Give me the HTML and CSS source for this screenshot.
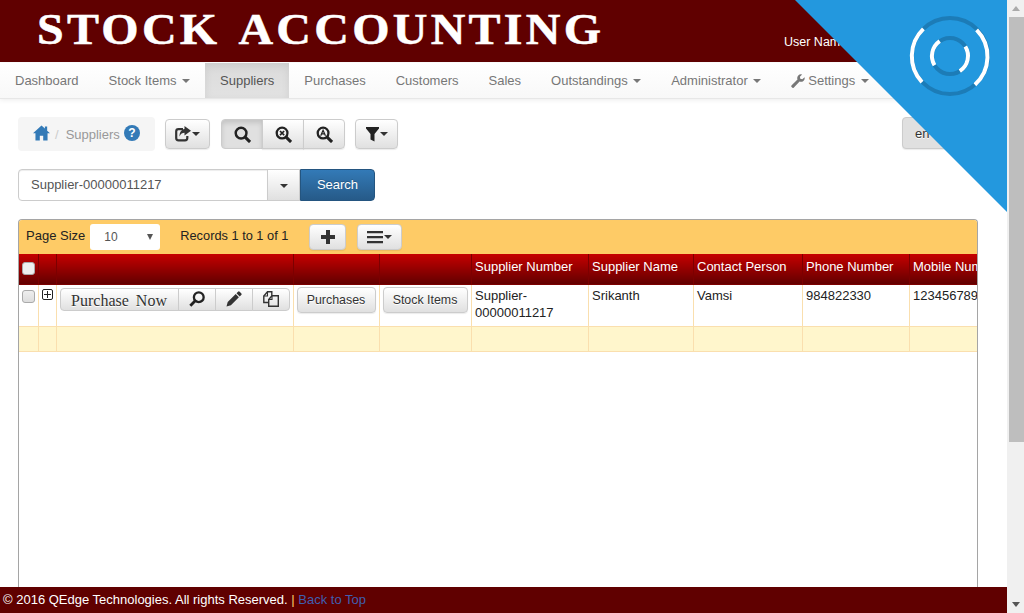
FILE: index.html
```html
<!DOCTYPE html>
<html lang="en">
<head>
<meta charset="utf-8">
<title>Stock Accounting</title>
<link rel="stylesheet" href="styles.css">
</head>
<body>
<div class="shell">
  <div class="page">
    <header class="masthead">
      <div class="brand">STOCK ACCOUNTING</div>
      <div class="user">User Name : admin</div>
    </header>
    <nav class="navbar">
      <a class="nav-item">Dashboard</a>
      <a class="nav-item">Stock Items <i class="caret"></i></a>
      <a class="nav-item active">Suppliers</a>
      <a class="nav-item">Purchases</a>
      <a class="nav-item">Customers</a>
      <a class="nav-item">Sales</a>
      <a class="nav-item">Outstandings <i class="caret"></i></a>
      <a class="nav-item">Administrator <i class="caret"></i></a>
      <a class="nav-item"><svg class="wrench" viewBox="0 0 14 14"><path d="M13.6 3.2a3.8 3.8 0 0 1-5 4.400L2.900 13.400a1.300 1.300 0 0 1-2-.1 1.300 1.300 0 0 1-.2-2L6.500 5.500a3.800 3.800 0 0 1 4.600-5L8.900 2.800l.4 2 2 .4z"/></svg>Settings <i class="caret"></i></a>
    </nav>
    <main class="content">
      <div class="toolbar">
        <div class="crumbs">
          <svg class="home" viewBox="0 0 18 16"><path d="M9 0 0 8.200h2.600V16h4.600v-5h3.600v5h4.600V8.200H18l-3-2.700V1h-2.400v2.300z"/></svg>
          <span class="sep">/</span>
          <span class="crumb">Suppliers</span>
          <span class="help">?</span>
        </div>
        <button class="btn btn-share"><svg class="ico" viewBox="0 0 16 16"><path d="M8 3.200H3.500A2.300 2.300 0 0 0 1.200 5.500v6.500a2.300 2.300 0 0 0 2.300 2.300h6.500a2.300 2.300 0 0 0 2.300-2.300V10" fill="none" stroke="#333" stroke-width="2.200"/><path d="M9.500 0 16 4.800 9.500 9.500V6.800C7.500 6.800 5.500 7.800 4.500 10.500 4.500 6 6.500 3.500 9.500 3z" fill="#333"/></svg><i class="caret dark"></i></button>
        <div class="btn-group">
          <button class="btn pressed"><svg class="ico big" viewBox="0 0 18 18"><circle cx="7.500" cy="7.500" r="5.700" fill="none" stroke="#222" stroke-width="2.600"/><path d="M11.500 11.500 17 17" stroke="#222" stroke-width="3.200"/></svg></button>
          <button class="btn"><svg class="ico big" viewBox="0 0 18 18"><circle cx="7.500" cy="7.500" r="5.700" fill="none" stroke="#222" stroke-width="2.400"/><path d="M11.500 11.500 17 17" stroke="#222" stroke-width="3.200"/><path d="M5.300 5.300l4.400 4.400M9.700 5.300l-4.400 4.400" stroke="#222" stroke-width="1.700"/></svg></button>
          <button class="btn"><svg class="ico big" viewBox="0 0 18 18"><circle cx="7.500" cy="7.500" r="5.700" fill="none" stroke="#222" stroke-width="2.400"/><path d="M11.500 11.500 17 17" stroke="#222" stroke-width="3.200"/><path d="M5 10.200 7.500 4.500 10 10.200M5.900 8.400h3.200" fill="none" stroke="#222" stroke-width="1.300"/></svg></button>
        </div>
        <button class="btn btn-filter"><svg class="ico funnel" viewBox="0 0 13 16"><path d="M0 1h13v1.500L8.500 8v7.500l-4-2V8L0 2.500z" fill="#222"/></svg><i class="caret dark"></i></button>
        <button class="btn lang">en-US</button>
      </div>
      <form class="search">
        <div class="search-box">Supplier-00000011217</div>
        <button type="button" class="btn-drop"><i class="caret dark"></i></button>
        <button type="button" class="btn-search">Search</button>
      </form>
      <section class="grid">
        <div class="grid-bar">
          <span class="bar-text">Page Size</span>
          <div class="pager">10<i class="pager-arrow"></i></div>
          <span class="bar-text records">Records 1 to 1 of 1</span>
          <button class="btn btn-add"><svg class="ico" viewBox="0 0 16 16"><path d="M6 1h4v5h5v4h-5v5H6v-5H1V6h5z" fill="#333"/></svg></button>
          <button class="btn btn-menu"><svg class="ico" viewBox="0 0 16 14"><path d="M0 1h16v2.200H0zM0 6h16v2.200H0zM0 11h16v2.200H0z" fill="#333"/></svg><i class="caret dark"></i></button>
        </div>
        <table class="data">
          <colgroup>
            <col class="c1"><col class="c2"><col class="c3"><col class="c4"><col class="c5"><col class="c6"><col class="c7"><col class="c8"><col class="c9"><col class="c10">
          </colgroup>
          <thead>
            <tr>
              <th class="chk"><span class="check head"></span></th><th></th><th></th><th></th><th></th>
              <th>Supplier Number</th><th>Supplier Name</th><th>Contact Person</th><th>Phone Number</th><th>Mobile Number</th>
            </tr>
          </thead>
          <tbody>
            <tr class="row">
              <td class="chk"><span class="check"></span></td>
              <td class="exp"><span class="expand"></span></td>
              <td class="act">
                <div class="btn-group small">
                  <button class="btn purchase">Purchase Now</button>
                  <button class="btn sq"><svg class="ico" viewBox="0 0 18 18"><circle cx="11" cy="7" r="5.500" fill="none" stroke="#222" stroke-width="2.600"/><path d="M7 11 1.500 16.500" stroke="#222" stroke-width="3.200"/></svg></button>
                  <button class="btn sq"><svg class="ico" viewBox="0 0 16 16"><path d="M12 .8a1.200 1.200 0 0 1 1.700 0l1.500 1.500a1.200 1.200 0 0 1 0 1.700l-1.500 1.500-3.200-3.200zM9.700 3.100l3.200 3.200-8 8L.5 15.500l1.200-4.400z" fill="#333"/></svg></button>
                  <button class="btn sq"><svg class="ico" viewBox="0 0 16 16"><path d="M5.500 11.500H.8V5L4.500.8h4.300v4" fill="none" stroke="#333" stroke-width="1.400"/><path d="M.8 5h3.700V.8" fill="none" stroke="#333" stroke-width="1.100"/><path d="M5.700 15.300V8.500L9 4.700h6.300v10.600z" fill="none" stroke="#333" stroke-width="1.400"/><path d="M5.700 8.500H9V4.700" fill="none" stroke="#333" stroke-width="1.100"/></svg></button>
                </div>
              </td>
              <td class="act"><button class="btn cell-btn">Purchases</button></td>
              <td class="act"><button class="btn cell-btn">Stock Items</button></td>
              <td>Supplier-<br>00000011217</td>
              <td>Srikanth</td>
              <td>Vamsi</td>
              <td>984822330</td>
              <td>1234567890</td>
            </tr>
            <tr class="filler"><td></td><td></td><td></td><td></td><td></td><td></td><td></td><td></td><td></td><td></td></tr>
          </tbody>
        </table>
      </section>
    </main>
    <footer class="footer">© 2016 QEdge Technologies. All rights Reserved. <span class="pipe">|</span> <a class="top">Back to Top</a></footer>
    <div class="ribbon">
      <svg class="spinner" viewBox="0 0 84 84">
        <circle cx="42" cy="42" r="38" class="ring-dark"/>
        <circle cx="42" cy="42" r="18" class="ring-dark"/>
        <path class="ring-white" d="M15.400 14.900A38 38 0 0 0 14 68.100M68.600 15.800A38 38 0 0 1 66.900 70.700M31.700 27.200A18 18 0 0 0 26.500 51.200M57.300 32.500A18 18 0 0 1 51.800 57.100"/>
      </svg>
    </div>
  </div>
  <div class="scrollbar">
    <span class="arrow up"></span>
    <div class="track"><div class="thumb"></div></div>
    <span class="arrow down"></span>
  </div>
</div>
</body>
</html>
```
FILE: styles.css
```css
* { box-sizing: border-box; }
html, body { margin: 0; height: 100%; overflow: hidden; }
body { font-family: "Liberation Sans", Arial, sans-serif; font-size: 13px; color: #222; background: #fff; }
button { font-family: inherit; }

.shell { display: flex; height: 613px; }
.page { position: relative; flex: 1; min-width: 0; display: flex; flex-direction: column; overflow: hidden; }

.masthead { height: 62px; flex: none; background: #600000; display: flex; justify-content: space-between; }
.brand { font-family: "Liberation Serif", serif; font-weight: bold; font-size: 44px; line-height: 60px; color: #fff; margin-left: 37px; letter-spacing: 3px; word-spacing: 5px; transform: scaleX(1.09); transform-origin: left center; white-space: nowrap; -webkit-text-stroke: 0.5px #fff; }
.user { color: #fff; font-size: 12.500px; line-height: 14px; margin-top: 35px; position: absolute; left: 784px; white-space: nowrap; }

.navbar { height: 36px; flex: none; margin-top: 1px; display: flex; background: linear-gradient(#fff, #f8f8f8); border-bottom: 1px solid #e7e7e7; box-shadow: 0 1px 5px rgba(0,0,0,.08); }
.nav-item { display: flex; align-items: center; padding: 0 15px; color: #777; font-size: 13px; white-space: nowrap; height: 35px; }
.nav-item.active { background: linear-gradient(#dbdbdb, #e2e2e2); color: #555; box-shadow: inset 0 3px 9px rgba(0,0,0,.08); }
.caret { display: inline-block; width: 0; height: 0; margin-left: 5.500px; border-top: 4px solid #777; border-left: 4px solid transparent; border-right: 4px solid transparent; }
.caret.dark { border-top-color: #333; margin-left: 1px; }
.wrench { width: 14px; height: 14px; fill: #777; margin-right: 3px; }

.content { flex: 1; min-height: 0; display: flex; flex-direction: column; padding: 18px 29px 0 18px; }
.toolbar { display: flex; align-items: flex-start; height: 34px; }
.crumbs { width: 137px; height: 34px; background: #f5f5f5; border-radius: 4px; display: flex; align-items: center; padding-left: 15px; color: #999; }
.home { width: 17px; height: 16px; fill: #337ab7; margin-top: -2px; }
.sep { margin: 0 7px 0 5px; color: #ccc; }
.crumb { font-size: 13px; color: #999; }
.help { width: 16px; height: 16px; border-radius: 50%; background: #337ab7; color: #fff; font-weight: bold; font-size: 12px; line-height: 16px; text-align: center; margin: -3px 0 0 4px; }

.btn { height: 30px; padding: 0; border: 1px solid #ccc; border-radius: 4px; background: linear-gradient(#fff, #e0e0e0); color: #333; display: inline-flex; align-items: center; justify-content: center; text-shadow: 0 1px 0 #fff; font-size: 12px; box-shadow: 0 1px 1px rgba(0,0,0,.08); }
.ico { width: 16px; height: 16px; display: block; }
.ico.big { width: 17px; height: 17px; }
.ico.funnel { width: 13px; }
.btn-share { width: 45px; margin: 2px 0 0 10px; }
.btn-filter { width: 43px; margin: 2px 0 0 10px; }
.btn-group { display: flex; margin: 2px 0 0 11px; }
.btn-group > .btn { width: 42px; border-radius: 0; margin-left: -1px; }
.btn-group > .btn:first-child { margin-left: 0; border-radius: 4px 0 0 4px; }
.btn-group > .btn:last-child { border-radius: 0 4px 4px 0; }
.btn.pressed { background: #e0e0e0; box-shadow: inset 0 3px 5px rgba(0,0,0,.125); }
.lang { width: 76px; height: 32px; margin-left: auto; background: #e0e0e0; justify-content: flex-start; padding-left: 12px; font-size: 13px; color: #333; }

.search { display: flex; margin: 18px 0 0; height: 32px; width: 357px; }
.search-box { width: 250px; border: 1px solid #ccc; border-radius: 4px 0 0 4px; padding: 0 12px; line-height: 30px; font-size: 13px; color: #555; box-shadow: inset 0 1px 1px rgba(0,0,0,.075); }
.btn-drop { width: 33px; margin-left: -1px; border: 1px solid #ccc; background: linear-gradient(#fff, #e0e0e0); padding: 0 0 4px; }
.btn-search { width: 75px; border: 1px solid #245580; border-radius: 0 4px 4px 0; background: linear-gradient(#337ab7, #265a88); color: #fff; font-size: 13px; padding: 0 0 2px; text-shadow: 0 -1px 0 rgba(0,0,0,.2); }

.grid { flex: 1; margin-top: 18px; border: 1px solid #a5a5a5; border-bottom: 0; border-radius: 4px 4px 0 0; overflow: hidden; min-height: 0; }
.grid-bar { height: 34px; background: #fecb66; display: flex; align-items: center; padding-left: 7px; color: #222; }
.bar-text { padding-bottom: 4px; }
.pager { position: relative; width: 70px; height: 26px; margin-left: 5px; background: #fff; border-radius: 3px; line-height: 26px; padding-left: 14px; font-size: 12px; color: #555; }
.pager-arrow { position: absolute; right: 7px; top: 10px; border-top: 6px solid #555; border-left: 3px solid transparent; border-right: 3px solid transparent; }
.records { margin-left: 20px; font-size: 12.800px; }
.btn-add { width: 37px; height: 26px; margin-left: 21px; }
.btn-menu { width: 45px; height: 26px; margin-left: 11px; }

.data { border-collapse: collapse; table-layout: fixed; width: 1057px; font-size: 13px; }
.c1 { width: 19px; } .c2 { width: 18px; } .c3 { width: 237px; } .c4 { width: 86px; } .c5 { width: 92px; } .c6 { width: 117px; } .c7 { width: 105px; } .c8 { width: 109px; } .c9 { width: 107px; } .c10 { width: 167px; }
.data th { height: 30px; background: linear-gradient(#c60000, #620000); border: 1px solid #7c0000; color: #fff; font-weight: normal; text-align: left; padding: 0 3px 5px 3.500px; white-space: nowrap; vertical-align: middle; }
.data td { border: 1px solid #fadfae; padding: 2px 3px 0 3.500px; vertical-align: top; color: #222; line-height: 17px; white-space: nowrap; }
.data th:first-child, .data td:first-child { border-left: 0; }
.data thead tr th { border-top: 0; }
.row td { height: 42px; }
.filler td { height: 25px; background: #fff6cc; }
.data td.chk, .data th.chk { padding: 0 0 0 3px; }
.data td.chk { padding-top: 5px; }
.check { display: block; width: 13px; height: 13px; border: 1px solid #aaa; border-radius: 3px; background: linear-gradient(#eee, #ddd); }
.check.head { background: #eee; }
.data td.exp { padding: 4px 0 0 3px; }
.expand { display: block; position: relative; width: 11px; height: 11px; border: 1px solid #222; border-radius: 2px; background: #fff; }
.expand::before, .expand::after { content: ""; position: absolute; background: #222; }
.expand::before { left: 1px; right: 1px; top: 4px; height: 1px; }
.expand::after { top: 1px; bottom: 1px; left: 4px; width: 1px; }
.data td.act { padding: 2px 3px 0; }
.btn-group.small { margin: 1px 0 0; }
.small .btn { height: 23px; box-shadow: none; }
.small .btn.purchase { width: 119px; padding-top: 3px; font-family: "Liberation Serif", serif; font-size: 16px; word-spacing: 3px; color: #333; }
.small .btn.sq { width: 38px; }
.cell-btn { width: 100%; height: 26px; font-size: 12.400px; color: #333; }

.footer { height: 26px; flex: none; background: #600000; color: #fff; line-height: 26px; padding-left: 3px; font-size: 13px; }
.pipe { color: #fecb66; }
.top { color: #3f5fb0; }

.ribbon { position: absolute; top: 0; right: 0; width: 212px; height: 212px; background: #2398de; clip-path: polygon(0 0, 100% 0, 100% 100%); }
.spinner { position: absolute; left: 113px; top: 14px; width: 84px; height: 84px; fill: none; stroke-width: 4; }
.ring-dark { stroke: #1c7cb7; }
.ring-white { stroke: #fff; }

.scrollbar { width: 17px; flex: none; background: #f0f0f0; display: flex; flex-direction: column; align-items: center; }
.track { flex: 1; width: 100%; padding: 0 0 0 1px; }
.thumb { width: 15px; height: 425px; margin-left: 1px; background: #bebebe; }
.arrow { flex: none; width: 0; height: 0; border-left: 4px solid transparent; border-right: 4px solid transparent; margin: 6px 0; }
.arrow.up { border-bottom: 5px solid #aaa; }
.arrow.down { border-top: 5px solid #555; }
```
